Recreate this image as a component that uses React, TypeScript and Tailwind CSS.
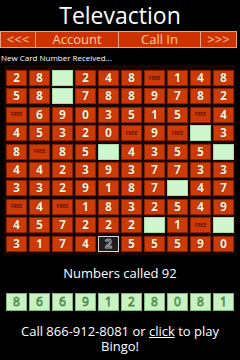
import React from "react";

const rows: string[][] = [
  ["2", "8", "G", "2", "4", "8", "F", "1", "4", "8"],
  ["5", "8", "G", "7", "8", "8", "9", "7", "8", "2"],
  ["F", "6", "9", "0", "3", "5", "1", "5", "F", "4"],
  ["4", "5", "3", "2", "0", "F", "9", "F", "G", "3"],
  ["8", "F", "8", "5", "G", "4", "3", "5", "5", "G"],
  ["4", "4", "2", "3", "9", "3", "7", "7", "3", "3"],
  ["3", "3", "2", "9", "1", "8", "7", "G", "4", "7"],
  ["F", "4", "F", "1", "8", "3", "2", "5", "4", "9"],
  ["4", "5", "7", "2", "2", "2", "G", "1", "F", "G"],
  ["3", "1", "7", "4", "D", "5", "5", "5", "9", "0"],
];

const called = ["8", "6", "6", "9", "1", "2", "8", "0", "8", "1"];

function Cell({ v }: { v: string }) {
  if (v === "G") {
    return <div className="h-[16px] border border-[#a9dba9] bg-[#d0f6d0]" />;
  }
  if (v === "F") {
    return (
      <div className="flex h-[16px] items-center justify-center border border-[#8a2000] bg-[#cc3a08] text-[5px] font-bold leading-none text-[#6a1000]">
        FREE
      </div>
    );
  }
  if (v === "D") {
    return (
      <div className="flex h-[16px] items-center justify-center border border-[#d8d8d8] bg-[#1e1e1e] text-[12px] font-bold leading-none text-[#2a2a2a] [-webkit-text-stroke:1px_#a0a0a0]">
        2
      </div>
    );
  }
  return (
    <div className="flex h-[16px] items-center justify-center border border-[#8a2000] bg-[#cc3a08] text-[12px] font-bold leading-none text-[#fff3d8] [text-shadow:0_0_1px_#3a0800]">
      {v}
    </div>
  );
}

export default function App() {
  return (
    <div className="h-[360px] w-[240px] overflow-hidden bg-black font-['Open_Sans',sans-serif] text-white">
      <div className="h-[30px] text-center text-[23px] leading-[30px]">Televaction</div>

      <div className="mt-px flex h-[17px] w-[237px] border border-[#e9a482] bg-[#cc3300] text-[13px] leading-[15px] text-[#ffcdb0]">
        <div className="w-[34px] text-center">&lt;&lt;&lt;</div>
        <div className="w-[83px] border-l border-[#e9a482] text-center">Account</div>
        <div className="w-[82px] border-l border-[#e9a482] text-center">Call In</div>
        <div className="flex-1 border-l border-[#e9a482] text-center">&gt;&gt;&gt;</div>
      </div>

      <div className="mt-[5px] pl-px text-[8px] leading-[10px]">New Card Number Received...</div>

      <div className="mx-[4px] mt-[2px] bg-[#1a0600] px-[2px] pb-[3px] pt-[5px]">
        <div className="grid grid-cols-10 gap-x-[2px] gap-y-[2.4px]">
          {rows.map((r, i) => r.map((v, j) => <Cell key={`${i}-${j}`} v={v} />))}
        </div>
      </div>

      <div className="mt-[9px] h-[18px] text-center text-[13px] leading-[18px]">Numbers called 92</div>

      <div className="mx-[6px] mt-[11px] grid grid-cols-10 gap-x-[2px]">
        {called.map((d, i) => (
          <div
            key={i}
            className="flex h-[18px] items-center justify-center border border-[#7fb87f] bg-[#c9f2c2] text-[12px] leading-none text-[#d6f7d0] [-webkit-text-stroke:0.8px_#4a8c4a]"
          >
            {d}
          </div>
        ))}
      </div>

      <div className="mt-[13px] px-2 text-center text-[13px] leading-[15px]">
        Call 866-912-8081 or <span className="underline">click</span> to play Bingo!
      </div>
    </div>
  );
}
